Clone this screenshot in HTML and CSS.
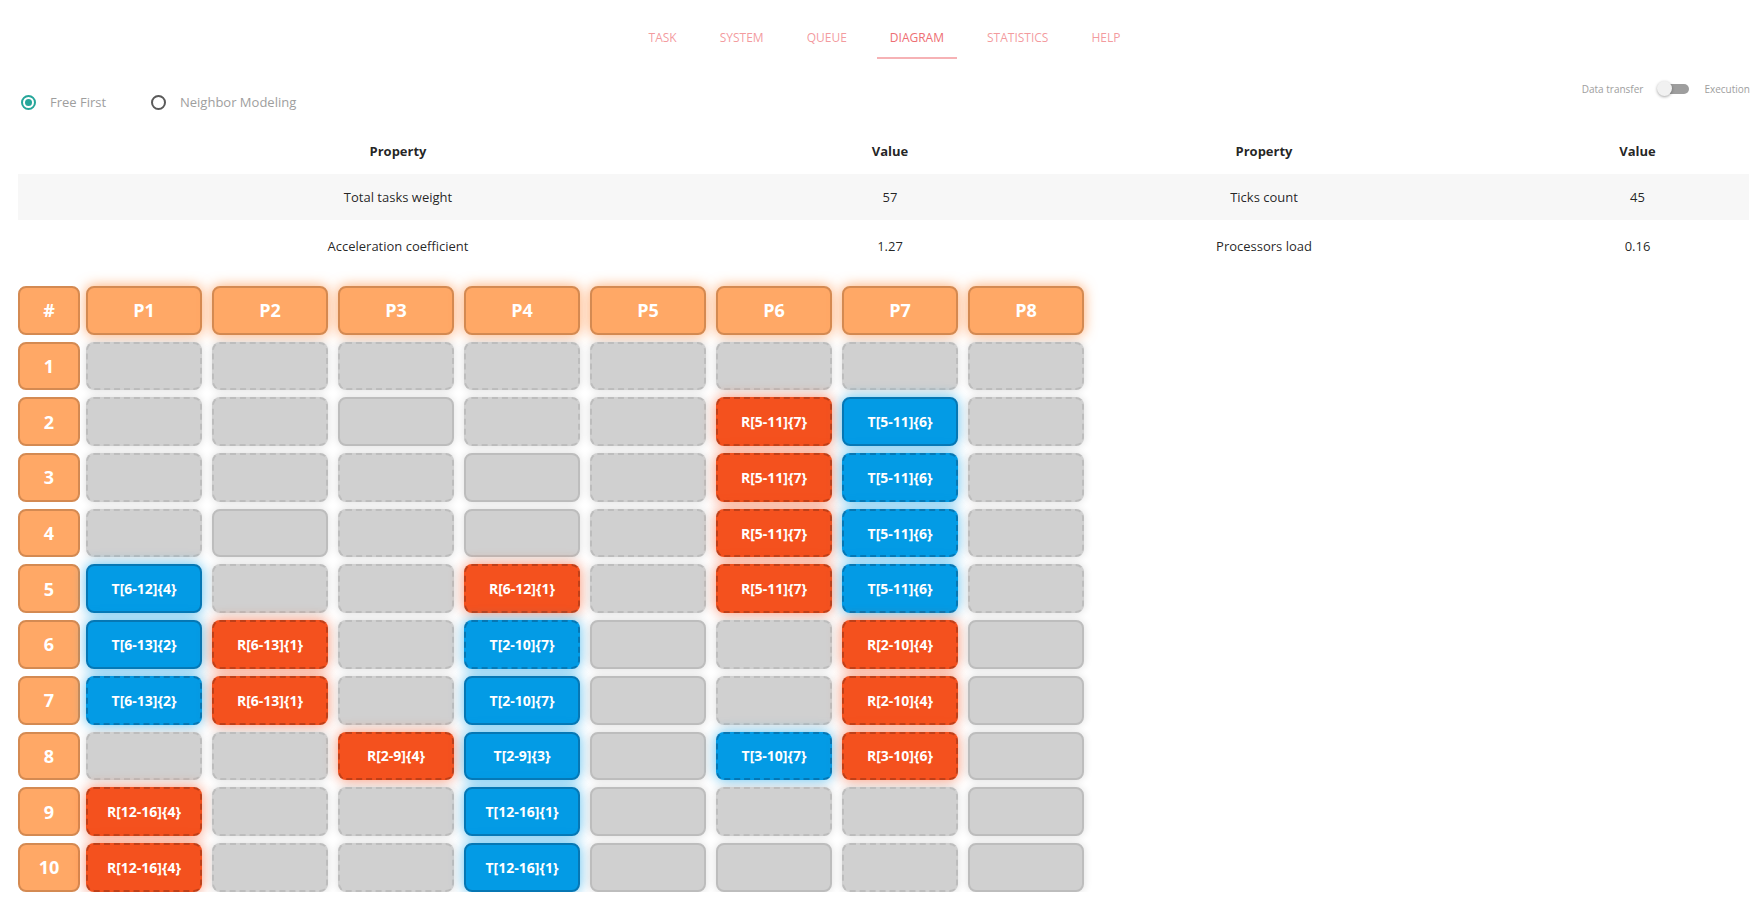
FILE: index.html
```html
<!DOCTYPE html>
<html lang="en">
<head>
<meta charset="utf-8">
<title>Diagram</title>
<link rel="stylesheet" href="styles.css">
</head>
<body>
<nav class="nav">
  <a class="tab">TASK</a>
  <a class="tab">SYSTEM</a>
  <a class="tab">QUEUE</a>
  <a class="tab active">DIAGRAM</a>
  <a class="tab">STATISTICS</a>
  <a class="tab">HELP</a>
</nav>

<div class="controls">
  <div class="radios">
    <label class="radio first"><span class="dot on"></span><span>Free First</span></label>
    <label class="radio"><span class="dot"></span><span>Neighbor Modeling</span></label>
  </div>
  <div class="switch">
    <span>Data transfer</span>
    <span class="lever"><span class="track"></span><span class="knob"></span></span>
    <span>Execution</span>
  </div>
</div>

<table class="stats">
  <colgroup><col class="c1"><col class="c2"><col class="c3"><col class="c4"></colgroup>
  <thead>
    <tr><th>Property</th><th>Value</th><th>Property</th><th>Value</th></tr>
  </thead>
  <tbody>
    <tr class="odd"><td>Total tasks weight</td><td>57</td><td>Ticks count</td><td>45</td></tr>
    <tr class="even"><td>Acceleration coefficient</td><td>1.27</td><td>Processors load</td><td>0.16</td></tr>
  </tbody>
</table>

<div class="grid">
  <div class="cell idx">#</div>
  <div class="cell head">P1</div><div class="cell head">P2</div><div class="cell head">P3</div><div class="cell head">P4</div>
  <div class="cell head">P5</div><div class="cell head">P6</div><div class="cell head">P7</div><div class="cell head">P8</div>

  <div class="cell idx">1</div>
  <div class="cell empty dashed"></div><div class="cell empty dashed"></div><div class="cell empty dashed"></div><div class="cell empty dashed"></div>
  <div class="cell empty dashed"></div><div class="cell empty dashed"></div><div class="cell empty dashed"></div><div class="cell empty dashed"></div>

  <div class="cell idx">2</div>
  <div class="cell empty dashed"></div><div class="cell empty dashed"></div><div class="cell empty"></div><div class="cell empty dashed"></div>
  <div class="cell empty dashed"></div><div class="cell r dashed">R[5-11]{7}</div><div class="cell t">T[5-11]{6}</div><div class="cell empty dashed"></div>

  <div class="cell idx">3</div>
  <div class="cell empty dashed"></div><div class="cell empty dashed"></div><div class="cell empty dashed"></div><div class="cell empty"></div>
  <div class="cell empty dashed"></div><div class="cell r dashed">R[5-11]{7}</div><div class="cell t dashed">T[5-11]{6}</div><div class="cell empty dashed"></div>

  <div class="cell idx">4</div>
  <div class="cell empty dashed"></div><div class="cell empty"></div><div class="cell empty dashed"></div><div class="cell empty"></div>
  <div class="cell empty dashed"></div><div class="cell r dashed">R[5-11]{7}</div><div class="cell t dashed">T[5-11]{6}</div><div class="cell empty dashed"></div>

  <div class="cell idx">5</div>
  <div class="cell t">T[6-12]{4}</div><div class="cell empty dashed"></div><div class="cell empty dashed"></div><div class="cell r dashed">R[6-12]{1}</div>
  <div class="cell empty dashed"></div><div class="cell r dashed">R[5-11]{7}</div><div class="cell t dashed">T[5-11]{6}</div><div class="cell empty dashed"></div>

  <div class="cell idx">6</div>
  <div class="cell t">T[6-13]{2}</div><div class="cell r dashed">R[6-13]{1}</div><div class="cell empty dashed"></div><div class="cell t dashed">T[2-10]{7}</div>
  <div class="cell empty"></div><div class="cell empty dashed"></div><div class="cell r dashed">R[2-10]{4}</div><div class="cell empty"></div>

  <div class="cell idx">7</div>
  <div class="cell t dashed">T[6-13]{2}</div><div class="cell r dashed">R[6-13]{1}</div><div class="cell empty dashed"></div><div class="cell t">T[2-10]{7}</div>
  <div class="cell empty"></div><div class="cell empty dashed"></div><div class="cell r dashed">R[2-10]{4}</div><div class="cell empty"></div>

  <div class="cell idx">8</div>
  <div class="cell empty dashed"></div><div class="cell empty dashed"></div><div class="cell r dashed">R[2-9]{4}</div><div class="cell t">T[2-9]{3}</div>
  <div class="cell empty"></div><div class="cell t dashed">T[3-10]{7}</div><div class="cell r dashed">R[3-10]{6}</div><div class="cell empty"></div>

  <div class="cell idx">9</div>
  <div class="cell r dashed">R[12-16]{4}</div><div class="cell empty dashed"></div><div class="cell empty dashed"></div><div class="cell t">T[12-16]{1}</div>
  <div class="cell empty"></div><div class="cell empty dashed"></div><div class="cell empty dashed"></div><div class="cell empty"></div>

  <div class="cell idx">10</div>
  <div class="cell r dashed">R[12-16]{4}</div><div class="cell empty dashed"></div><div class="cell empty dashed"></div><div class="cell t">T[12-16]{1}</div>
  <div class="cell empty"></div><div class="cell empty"></div><div class="cell empty dashed"></div><div class="cell empty"></div>
</div>
</body>
</html>
```

FILE: styles.css
```css
html, body {
  margin: 0;
  padding: 0;
  background: #ffffff;
  font-family: "Open Sans", "Noto Sans", sans-serif;
}

/* ---------- top tabs ---------- */
.nav {
  display: flex;
  justify-content: center;
  padding: 17px 0 0 12px;
  height: 42px;
  box-sizing: content-box;
}
.tab {
  display: block;
  margin: 0 8.5px;
  padding: 0 13px;
  height: 40px;
  line-height: 42px;
  font-size: 12px;
  color: rgba(238, 110, 115, 0.7);
  border-bottom: 2px solid transparent;
  white-space: nowrap;
  cursor: pointer;
}
.tab.active {
  color: #ee6e73;
  border-bottom-color: #f6b2b5;
}

/* ---------- controls ---------- */
.controls {
  display: flex;
  justify-content: space-between;
  align-items: flex-start;
  height: 69px;
}
.radios {
  display: flex;
  padding: 35px 0 0 21px;
}
.radio {
  display: flex;
  align-items: center;
  gap: 14px;
  height: 16px;
  font-size: 13px;
  color: #9e9e9e;
}
.radio.first {
  width: 130px;
}
.dot {
  display: flex;
  align-items: center;
  justify-content: center;
  width: 15px;
  height: 15px;
  box-sizing: border-box;
  border: 2px solid #5a5a5a;
  border-radius: 50%;
}
.dot.on {
  border-color: #26a69a;
}
.dot.on::after {
  content: "";
  width: 7px;
  height: 7px;
  border-radius: 50%;
  background: #26a69a;
}

.switch {
  display: flex;
  align-items: center;
  padding: 21px 7px 0 0;
  height: 17px;
  font-size: 10px;
  color: #9e9e9e;
}
.lever {
  position: relative;
  display: block;
  width: 32px;
  height: 17px;
  margin: 0 15px 0 14px;
}
.track {
  position: absolute;
  left: 3px;
  right: 0;
  top: 4px;
  height: 10px;
  border-radius: 5px;
  background: #9e9e9e;
}
.knob {
  position: absolute;
  left: 0;
  top: 1px;
  width: 15px;
  height: 15px;
  border-radius: 50%;
  background: #f1f1f1;
  box-shadow: 0 1px 3px rgba(0, 0, 0, 0.35);
}

/* ---------- stats table ---------- */
.stats {
  margin-left: 18px;
  width: 1731px;
  border-collapse: collapse;
  table-layout: fixed;
  font-size: 13px;
  color: rgba(0, 0, 0, 0.87);
}
.c1 { width: 760px; }
.c2 { width: 224px; }
.c3 { width: 524px; }
.c4 { width: 223px; }
.stats th,
.stats td {
  height: 46px;
  padding: 0 5px;
  text-align: center;
  vertical-align: middle;
}
.stats tr.even td {
  height: 51px;
}
.stats th {
  font-weight: 700;
}
.stats tr.odd {
  background: #f7f7f7;
}

/* ---------- diagram grid ---------- */
.grid {
  display: grid;
  grid-template-columns: 68px repeat(8, 126px);
  grid-auto-rows: 48.7px;
  row-gap: 7px;
  margin: 15px 0 0 18px;
}
.cell {
  width: 116px;
  box-sizing: border-box;
  border: 2px solid;
  border-radius: 8px;
  display: flex;
  align-items: center;
  justify-content: center;
  color: #ffffff;
  font-weight: 700;
  font-size: 14px;
  white-space: nowrap;
}
.idx {
  width: 62px;
  background: #ffa866;
  border-color: #d48a52;
  font-size: 18px;
}
.head {
  background: #ffa866;
  border-color: #d48a52;
  font-size: 18px;
  box-shadow: 0 0 13px rgba(255, 140, 60, 0.75);
}
.empty {
  background: #d0d0d0;
  border-color: #bdbdbd;
  box-shadow: 0 0 9px rgba(0, 0, 0, 0.14);
}
.r {
  background: #f4511e;
  border-color: #bf4019;
  box-shadow: 0 0 13px rgba(244, 81, 30, 0.65);
}
.t {
  background: #039be5;
  border-color: #0677b4;
  box-shadow: 0 0 13px rgba(3, 155, 229, 0.65);
}
.dashed {
  border-style: dashed;
}
```
